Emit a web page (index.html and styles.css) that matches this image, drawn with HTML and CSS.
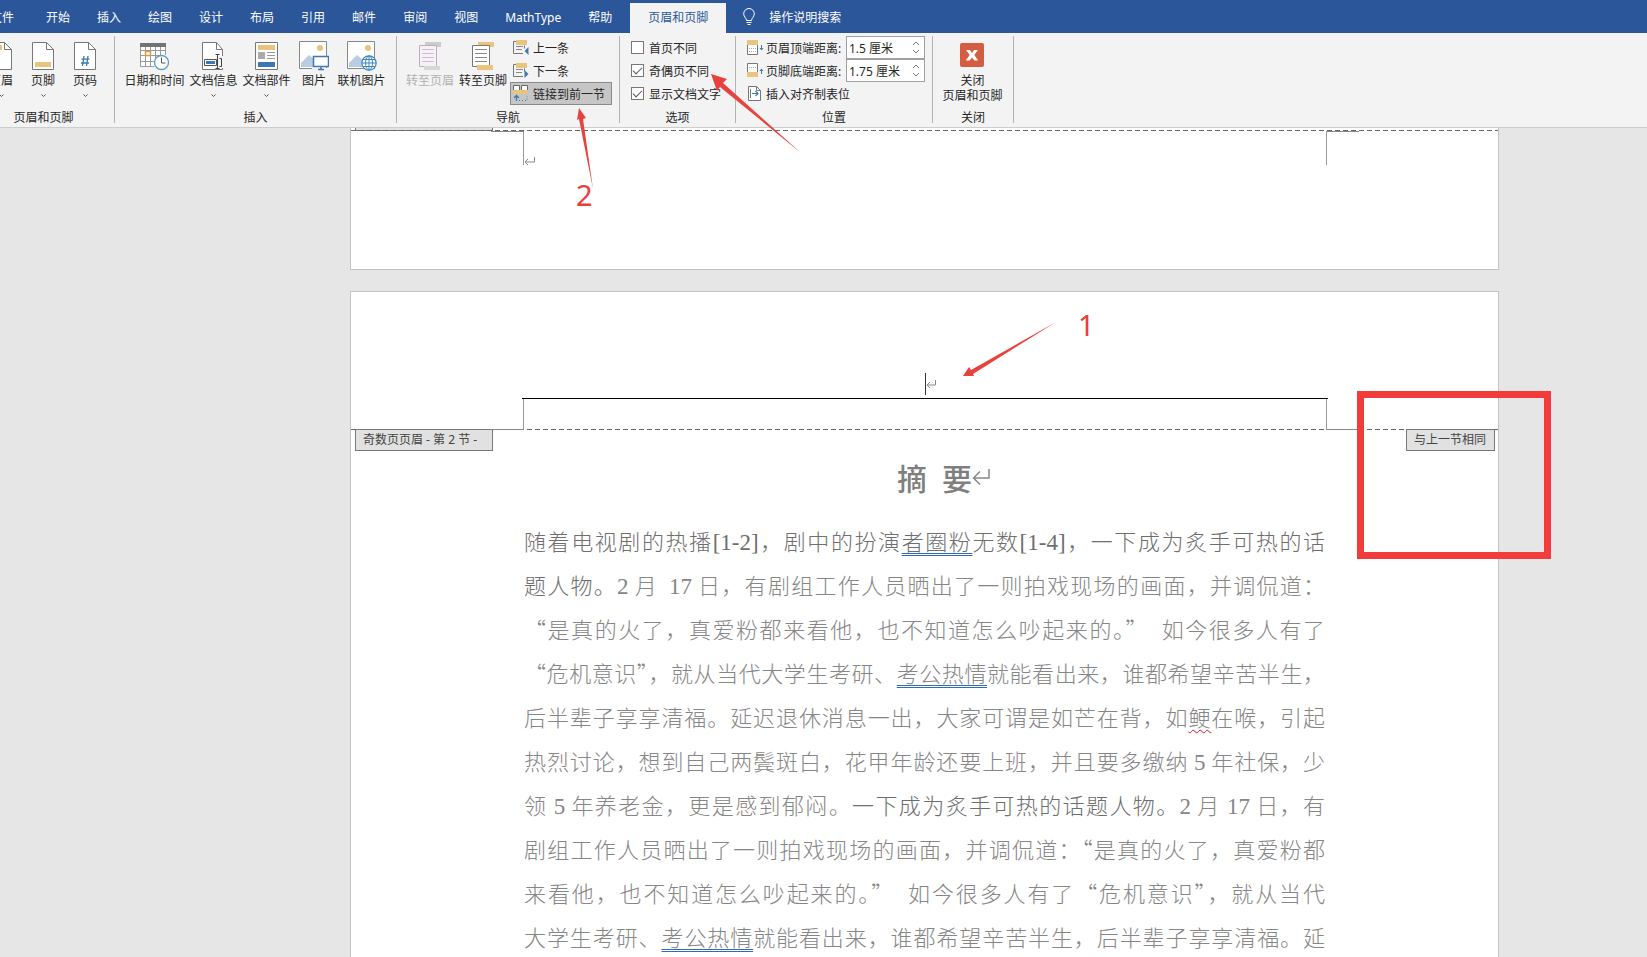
FILE: index.html
```html
<!DOCTYPE html>
<html lang="zh-CN">
<head>
    <meta charset="UTF-8">
    <meta name="viewport" content="width=device-width, initial-scale=1.0">
    <title>页眉和页脚</title>
    <link rel="stylesheet" href="styles.css">
</head>
<body>
    <!-- 选项卡 -->
    <nav class="tabs">
        <button class="tab tab-file">文件</button>
        <button class="tab">开始</button>
        <button class="tab">插入</button>
        <button class="tab">绘图</button>
        <button class="tab">设计</button>
        <button class="tab">布局</button>
        <button class="tab">引用</button>
        <button class="tab">邮件</button>
        <button class="tab">审阅</button>
        <button class="tab">视图</button>
        <button class="tab">MathType</button>
        <button class="tab">帮助</button>
        <button class="tab active">页眉和页脚</button>
        <button class="tab tell-me">
            <svg width="12" height="18" viewBox="0 0 12 18" fill="none" stroke="#fff"><path d="M3.5 12.5C3.5 10 .7 9 .7 5.8a5.3 5.3 0 0 1 10.6 0C11.300 9 8.500 10 8.500 12.500zM3.500 14.500h5M4.500 16.500h3"/></svg>
            操作说明搜索
        </button>
    </nav>

    <!-- 功能区 -->
    <div class="ribbon">
        <section class="group group-first">
            <div class="tools">
                <button class="big">
                    <svg width="22" height="28" viewBox="0 0 22 28"><path d="M.5.5h14l7 7v20H.5z" fill="#fff" stroke="#777"/><path d="M14.500.5v7h7" fill="none" stroke="#777"/><path d="M3 3h9v5H3z" fill="#e8c47c"/></svg>
                    <span>页眉</span>
                    <svg class="drop" width="5" height="4" viewBox="0 0 5 4"><path d="M.5.5l2 2 2-2" fill="none" stroke="#555"/></svg>
                </button>
                <button class="big">
                    <svg width="22" height="28" viewBox="0 0 22 28"><path d="M.5.5h14l7 7v20H.5z" fill="#fff" stroke="#777"/><path d="M14.500.5v7h7" fill="none" stroke="#777"/><path d="M3 20h16v5H3z" fill="#e8c47c"/></svg>
                    <span>页脚</span>
                    <svg class="drop" width="5" height="4" viewBox="0 0 5 4"><path d="M.5.5l2 2 2-2" fill="none" stroke="#555"/></svg>
                </button>
                <button class="big">
                    <svg width="22" height="28" viewBox="0 0 22 28"><path d="M.5.5h14l7 7v20H.5z" fill="#fff" stroke="#777"/><path d="M14.500.5v7h7" fill="none" stroke="#777"/><path d="M10 14L8.500 24M14 14l-1.500 10M7.500 17.200h8M7 21h8" fill="none" stroke="#3c78b4" stroke-width="1.300"/></svg>
                    <span>页码</span>
                    <svg class="drop" width="5" height="4" viewBox="0 0 5 4"><path d="M.5.5l2 2 2-2" fill="none" stroke="#555"/></svg>
                </button>
            </div>
            <h2>页眉和页脚</h2>
        </section>

        <section class="group group-insert">
            <div class="tools">
                <button class="big">
                    <svg width="30" height="28" viewBox="0 0 30 28"><path d="M1 1h26v24H1z" fill="#fff"/><path d="M1.500 4v20.500h14M6.500 4v20.500M11.500 4v20.500M16.500 4v12M21.500 4v9M26.500 4v9M1.500 8.500h25M1.500 13.500h20M1.500 19.500h14" fill="none" stroke="#999"/><path d="M1 1h26v4H1z" fill="#737373"/><path d="M6.500 9.500h5v4h-5z" fill="#fff" stroke="#dc9a50" stroke-width="1.500"/><circle cx="22.500" cy="20.500" r="7" fill="#fff" stroke="#5b9bc8" stroke-width="1.300"/><path d="M22.500 15.500v5.500h4" fill="none" stroke="#555"/></svg>
                    <span>日期和时间</span>
                </button>
                <button class="big">
                    <svg width="22" height="28" viewBox="0 0 22 28"><path d="M.5.5h14l6 7v20H.5z" fill="#fff" stroke="#777"/><path d="M14.500.5v7h6" fill="none" stroke="#777"/><path d="M14 14h7v12h-7z" fill="#f2f2f2"/><path d="M2.500 17.500h12v6h-12z" fill="#fff" stroke="#555"/><path d="M4 19h9v3H4z" fill="#3c78b4"/><path d="M13.500 12.500h4M15.500 12.500v14M13.500 26.500h4M17.500 16.500h2v8h-2" fill="none" stroke="#444"/></svg>
                    <span>文档信息</span>
                    <svg class="drop" width="5" height="4" viewBox="0 0 5 4"><path d="M.5.5l2 2 2-2" fill="none" stroke="#555"/></svg>
                </button>
                <button class="big">
                    <svg width="24" height="28" viewBox="0 0 24 28"><path d="M.5.5h22v27H.5z" fill="#fff" stroke="#777"/><path d="M3 3h17v5H3z" fill="#e8c47c"/><path d="M3 10h7v7H3z" fill="#aaa"/><path d="M12 10.500h8M12 13.500h8M12 16.500h8" stroke="#999"/><path d="M3 20h17v5H3z" fill="#3c78b4"/></svg>
                    <span>文档部件</span>
                    <svg class="drop" width="5" height="4" viewBox="0 0 5 4"><path d="M.5.5l2 2 2-2" fill="none" stroke="#555"/></svg>
                </button>
                <button class="big">
                    <svg width="30" height="30" viewBox="0 0 30 30"><path d="M.5.5h27v27H.5z" fill="#fff" stroke="#888"/><circle cx="21" cy="7" r="3" fill="#e8c47c"/><path d="M2 26v-4l8-8 5 4v8z" fill="#b8cde2"/><path d="M14.500 15.500h15v10h-15z" fill="#fff" stroke="#3c78b4" stroke-width="1.500"/><path d="M13 27h16v2H13z" fill="#f2f2f2"/><path d="M22 26v3M19 28.500h6" stroke="#3c78b4" stroke-width="1.500"/></svg>
                    <span>图片</span>
                </button>
                <button class="big">
                    <svg width="30" height="30" viewBox="0 0 30 30"><path d="M.5.5h27v27H.5z" fill="#fff" stroke="#888"/><circle cx="21" cy="7" r="3" fill="#e8c47c"/><path d="M2 26v-4l8-8 6 5v7z" fill="#b8cde2"/><circle cx="22" cy="22" r="7.200" fill="#fff" stroke="#3c86bd" stroke-width="1.200"/><path d="M22 15v14M15 22h14M16 18.500h12M16 25.500h12" stroke="#3c86bd"/><ellipse cx="22" cy="22" rx="3.500" ry="7" fill="none" stroke="#3c86bd"/></svg>
                    <span>联机图片</span>
                </button>
            </div>
            <h2>插入</h2>
        </section>

        <section class="group group-nav">
            <div class="tools">
                <button class="big" disabled>
                    <svg width="24" height="28" viewBox="0 0 24 28"><path d="M7 0h16v5H7z" fill="#ccc"/><path d="M1.500 3.500h17v21h-17z" fill="#f6f0f7" stroke="#b9b0bb"/><path d="M4 7.500h12M4 11.500h12M4 15.500h12M4 19.500h12" stroke="#cdbfd0"/><path d="M6 24h16v4H6z" fill="#d6d6d6"/></svg>
                    <span>转至页眉</span>
                </button>
                <button class="big">
                    <svg width="24" height="28" viewBox="0 0 24 28"><path d="M7 0h16v5H7z" fill="#e8c47c"/><path d="M1.500 3.500h17v21h-17z" fill="#fff" stroke="#777"/><path d="M4 7.500h12M4 11.500h12M4 15.500h12M4 19.500h12" stroke="#888"/><path d="M6 23h16v5H6z" fill="#e8c47c"/></svg>
                    <span>转至页脚</span>
                </button>
                <div class="rows">
                    <button class="small">
                        <svg width="16" height="16" viewBox="0 0 16 16"><path d="M3 0h11v5H3z" fill="#e8c47c"/><path d="M3 1.500H.5v12H10M11.500 5.500v3" fill="none" stroke="#777"/><path d="M3 6.500h7M3 9.500h6" stroke="#888"/><path d="M15.500 7v8l-4-4z" fill="#3c78b4"/></svg>
                        上一条
                    </button>
                    <button class="small">
                        <svg width="16" height="16" viewBox="0 0 16 16"><path d="M3 0h11v5H3z" fill="#e8c47c"/><path d="M3 1.500H.5v12H10M11.500 5.500v3" fill="none" stroke="#777"/><path d="M3 6.500h7M3 9.500h6" stroke="#888"/><path d="M11.500 7v8l4-4z" fill="#3c78b4"/></svg>
                        下一条
                    </button>
                    <button class="small pressed">
                        <svg width="16" height="17" viewBox="0 0 16 17"><path d="M.5 5V.5h6V5M8.500 5V.5h6V5" fill="#fff" stroke="#666"/><path d="M0 5h15v4H0z" fill="#e8c47c"/><path d="M3.500 16v-5M1 13l2.500-2.500L6 13" fill="none" stroke="#3c78b4" stroke-width="1.300"/><path d="M3 15.500h11V11" fill="none" stroke="#3c78b4" stroke-dasharray="1 2"/></svg>
                        链接到前一节
                    </button>
                </div>
            </div>
            <h2>导航</h2>
        </section>

        <section class="group group-options">
            <div class="rows">
                <label class="check"><input type="checkbox">首页不同</label>
                <label class="check"><input type="checkbox" checked>奇偶页不同</label>
                <label class="check"><input type="checkbox" checked>显示文档文字</label>
            </div>
            <h2>选项</h2>
        </section>

        <section class="group group-position">
            <div class="rows">
                <div class="measure">
                    <svg width="17" height="15" viewBox="0 0 17 15"><path d="M.5 5v9.500h10V5" fill="#fff" stroke="#777"/><path d="M0 0h11v5H0z" fill="#e8c47c"/><path d="M2 8.500h8M2 11.500h8" stroke="#aaa" stroke-dasharray="1 1"/><path d="M14.500 5v4" stroke="#3c78b4"/><path d="M12.500 8h4l-2 2.500z" fill="#3c78b4"/></svg>
                    <label for="header-top">页眉顶端距离:</label>
                    <div class="spin">
                        <input type="text" id="header-top" value="1.5 厘米">
                        <div class="arrows">
                            <button aria-label="增加"><svg width="8" height="5" viewBox="0 0 8 5"><path d="M1 4l3-3 3 3" fill="none" stroke="#777"/></svg></button>
                            <button aria-label="减少"><svg width="8" height="5" viewBox="0 0 8 5"><path d="M1 1l3 3 3-3" fill="none" stroke="#777"/></svg></button>
                        </div>
                    </div>
                </div>
                <div class="measure">
                    <svg width="17" height="15" viewBox="0 0 17 15"><path d="M.5 10V.5h10V10" fill="#fff" stroke="#777"/><path d="M0 9h11v5H0z" fill="#e8c47c"/><path d="M2 4.500h8" stroke="#aaa" stroke-dasharray="1 1"/><path d="M14.500 7v4" stroke="#3c78b4"/><path d="M12.500 8h4l-2-2.500z" fill="#3c78b4"/></svg>
                    <label for="footer-bottom">页脚底端距离:</label>
                    <div class="spin">
                        <input type="text" id="footer-bottom" value="1.75 厘米">
                        <div class="arrows">
                            <button aria-label="增加"><svg width="8" height="5" viewBox="0 0 8 5"><path d="M1 4l3-3 3 3" fill="none" stroke="#777"/></svg></button>
                            <button aria-label="减少"><svg width="8" height="5" viewBox="0 0 8 5"><path d="M1 1l3 3 3-3" fill="none" stroke="#777"/></svg></button>
                        </div>
                    </div>
                </div>
                <button class="measure">
                    <svg width="17" height="15" viewBox="0 0 17 15"><path d="M1.500.5h8l4 4v10h-12z" fill="#fff" stroke="#777"/><path d="M9.500.5v4h4M3.500 3v9" fill="none" stroke="#777"/><path d="M5 7.500h6M8.500 5l2.500 2.500L8.500 10" fill="none" stroke="#3c78b4" stroke-width="1.200"/></svg>
                    插入对齐制表位
                </button>
            </div>
            <h2>位置</h2>
        </section>

        <section class="group group-close">
            <div class="tools">
                <button class="big">
                    <svg width="24" height="28" viewBox="0 0 24 28"><rect y="1" width="24" height="24" rx="2" fill="#d45c40"/><path d="M6 8h4l2 3 2-3h4l-3.700 5 4 5.500h-4L12 15.500 9.700 18.500H5.700l4-5.500z" fill="#fff"/></svg>
                    <span>关闭<br>页眉和页脚</span>
                </button>
            </div>
            <h2>关闭</h2>
        </section>
    </div>

    <!-- 文档区 -->
    <main class="workspace">
        <article class="page page-prev">
            <div class="mark-edge"></div>
            <div class="dashes"></div>
            <div class="corners"><svg width="11" height="9" viewBox="0 0 11 9"><path d="M10.500 0v5H1M4 2L1 5l3 3" fill="none" stroke="#888"/></svg></div>
        </article>

        <article class="page page-current">
            <header class="header-text"><i class="caret"></i><svg width="10" height="9" viewBox="0 0 10 9"><path d="M9.500 0v5H1M4 2L1 5l3 3" fill="none" stroke="#888"/></svg></header>
            <div class="corners"></div>
            <div class="dashes"></div>
            <div class="marks">
                <span class="mark mark-section">奇数页页眉 - 第 2 节 -</span>
                <span class="mark">与上一节相同</span>
            </div>
            <h1>摘&ensp;要<svg width="18" height="17" viewBox="0 0 18 17"><path d="M17 0v9H1.500M8 2.500L1.500 9 8 15.500" fill="none" stroke="#888" stroke-width="1.500"/></svg></h1>
            <div class="text">
                <p><b>随着电视剧的热播<span class="num">[1-2]</span>，剧中的扮演<u>者圈粉</u>无数<span class="num">[1-4]</span>，一下成为炙手可热的话</b></p>
                <p><b>题人物。</b><span class="num">2</span> 月&ensp;<span class="num">17</span> 日，有剧组工作人员晒出了一则拍戏现场的画面，并调侃道：</p>
                <p>“是真的火了，真爱粉都来看他，也不知道怎么吵起来的。”　如今很多人有了</p>
                <p>“危机意识”，就从当代大学生考研、<u>考公热情</u>就能看出来，谁都希望辛苦半生，</p>
                <p>后半辈子享享清福。延迟退休消息一出，大家可谓是如芒在背，如<u class="typo">鲠</u>在喉，引起</p>
                <p>热烈讨论，想到自己两鬓斑白，花甲年龄还要上班，并且要多缴纳 <span class="num">5</span> 年社保，少</p>
                <p>领 <span class="num">5</span> 年养老金，更是感到郁闷。<b>一下成为炙手可热的话题人物。</b><span class="num">2</span> 月 <span class="num">17</span> 日，有</p>
                <p>剧组工作人员晒出了一则拍戏现场的画面，并调侃道：“是真的火了，真爱粉都</p>
                <p>来看他，也不知道怎么吵起来的。”　如今很多人有了“危机意识”，就从当代</p>
                <p>大学生考研、<u>考公热情</u>就能看出来，谁都希望辛苦半生，后半辈子享享清福。延</p>
            </div>
        </article>
    </main>

    <!-- 标注 -->
    <svg class="arrow arrow-odd" width="91" height="80" viewBox="0 0 91 80"><path d="M0 0l16 5-4 4 78 70L9 13l-3 4z" fill="#e8413e"/></svg>
    <svg class="arrow arrow-link" width="20" height="82" viewBox="0 0 20 82"><path d="M2 0l7 10-3 1 10 70L2 11l-2 1z" fill="#e8413e"/></svg>
    <svg class="arrow arrow-header" width="94" height="55" viewBox="0 0 94 55"><path d="M0 54l6-9 2 3L93 0 10 52l1 2z" fill="#e8413e"/></svg>
    <span class="step step-one">1</span>
    <span class="step step-two">2</span>
    <div class="red-box"></div>
</body>
</html>
```

FILE: styles.css
```css
* {
    box-sizing: border-box;
}

body {
    margin: 0;
    height: 100vh;
    display: flex;
    flex-direction: column;
    position: relative;
    overflow: hidden;
    background: #e6e6e6;
    color: #262626;
    font-family: "Noto Sans", "Noto Sans CJK SC", sans-serif;
    font-size: 12px;
}

button {
    margin: 0;
    padding: 0;
    border: 0;
    background: none;
    color: inherit;
    font: inherit;
    white-space: nowrap;
}

svg {
    display: block;
    flex: none;
}

/* 选项卡 */
.tabs {
    display: flex;
    align-items: stretch;
    gap: 27px;
    height: 33px;
    padding-top: 3px;
    background: #2b579a;
    color: #fff;
    flex: none;
}

.tab {
    padding-bottom: 2px;
    flex: none;
}

.tab-file {
    margin-left: -10px;
    margin-right: 5px;
}

.tab.active {
    margin-left: -9px;
    padding: 0 18px 2px;
    background: #f3f3f3;
    color: #2b579a;
}

.tell-me {
    display: flex;
    align-items: center;
    gap: 14px;
    margin-left: -10px;
}

/* 功能区 */
.ribbon {
    display: flex;
    height: 95px;
    padding: 3px 0 4px;
    background: #f3f3f3;
    border-bottom: 1px solid #cdcdcd;
    flex: none;
}

.group {
    display: flex;
    flex-direction: column;
    border-right: 1px solid #b4b4b4;
    flex: none;
}

.group h2 {
    margin: 0;
    padding-top: 5px;
    font-size: 12px;
    font-weight: 400;
    line-height: 16px;
    text-align: center;
}

.group-first {
    width: 142px;
    margin-left: -27px;
}

.group-insert {
    width: 282px;
}

.group-nav {
    width: 223px;
}

.group-options {
    width: 116px;
}

.group-position {
    width: 197px;
}

.group-close {
    width: 81px;
}

.tools {
    display: flex;
    justify-content: center;
    height: 69px;
}

.big {
    display: flex;
    flex-direction: column;
    align-items: center;
    min-width: 42px;
    height: 69px;
    padding: 5px 3px 0 2px;
    line-height: 15px;
}

.big > svg:first-child {
    height: 30px;
    margin-bottom: 2px;
}

.big:disabled {
    color: #b1b1b1;
}

.big .drop {
    margin-top: 6px;
}

.rows {
    display: grid;
    grid-auto-rows: 23px;
    height: 69px;
}

.small {
    display: flex;
    align-items: center;
    gap: 4px;
    padding: 0 6px 0 2px;
    border: 1px solid transparent;
}

.small.pressed {
    background: #c6c6c6;
    border-color: #8a8a8a;
}

.check {
    display: flex;
    align-items: center;
    gap: 5px;
    padding-left: 11px;
}

.check input {
    appearance: none;
    width: 13px;
    height: 13px;
    margin: 0;
    border: 1px solid #777;
    background: #fff;
    display: grid;
    place-items: center;
}

.check input:checked::before {
    content: "";
    width: 8px;
    height: 4px;
    margin-bottom: 2px;
    border-left: 1px solid #555;
    border-bottom: 1px solid #555;
    transform: rotate(-45deg);
}

.measure {
    display: flex;
    align-items: center;
    gap: 2px;
    padding-left: 11px;
}

.measure label {
    flex: 1;
    white-space: nowrap;
}

.spin {
    display: flex;
    width: 79px;
    height: 23px;
    margin-right: 7px;
    border: 1px solid #a0a0a0;
    background: #fff;
}

.spin input {
    width: 100%;
    min-width: 0;
    padding: 0 0 0 2px;
    border: 0;
    background: none;
    color: inherit;
    font: inherit;
}

.arrows {
    display: flex;
    flex-direction: column;
    justify-content: space-evenly;
    padding: 0 4px;
}

/* 文档区 */
.workspace {
    flex: 1;
    min-height: 0;
    overflow: hidden;
    padding: 0 148px 0 350px;
    display: flex;
    flex-direction: column;
    gap: 21px;
}

.page {
    background: #fff;
    border: 1px solid #c3c3c3;
    flex: none;
}

.page-prev {
    height: 142px;
    border-top: 0;
}

/* 上一页页眉标签的下沿 */
.mark-edge {
    width: 138px;
    height: 3px;
    margin: 0 0 -1px 4px;
    border: 1px solid #777;
    border-top: 0;
    background: #e1e1e1;
}

.dashes {
    height: 1px;
    background: repeating-linear-gradient(90deg, #666 0 5px, transparent 5px 8px);
}

.corners {
    position: relative;
    height: 30px;
    margin: 0 171px 0 172px;
    border: 1px solid #999;
    border-width: 0 1px;
}

.page-prev .corners {
    height: 34px;
    padding-top: 26px;
}

/* 页边角线 */
.corners::before,
.corners::after {
    content: "";
    position: absolute;
    bottom: -1px;
    width: 33px;
    height: 1px;
    background: #888;
}

.corners::before {
    right: 100%;
}

.corners::after {
    left: 100%;
}

.page-prev .corners::before,
.page-prev .corners::after {
    top: 0;
}

.header-text {
    display: flex;
    align-items: center;
    justify-content: center;
    height: 107px;
    margin: 0 170px 0 171px;
    padding: 81px 0 3px 10px;
    border-bottom: 1px solid #000;
}

.caret {
    width: 1px;
    height: 22px;
    background: #333;
}

.marks {
    display: flex;
    justify-content: space-between;
    margin-top: -1px;
    padding: 0 3px 0 4px;
}

.mark {
    padding: 0 8px 0 7px;
    border: 1px solid #777;
    background: #e1e1e1;
    color: #444;
    line-height: 20px;
}

.mark-section {
    min-width: 138px;
}

h1 {
    display: flex;
    align-items: center;
    justify-content: center;
    margin: 0;
    padding-left: 38px;
    color: #7f7f7f;
    font-family: "Noto Sans CJK SC", sans-serif;
    font-size: 30px;
    font-weight: 500;
    line-height: 52px;
}

.text {
    margin: 15px 173px 0;
    color: #868686;
    font-family: "Noto Sans CJK SC", sans-serif;
    font-size: 22px;
    font-weight: 300;
    line-height: 44px;
}

.text p {
    height: 44px;
    margin: 0;
    text-align: justify;
    text-align-last: justify;
    white-space: nowrap;
}

.text b {
    color: #6e6e6e;
    font-weight: 300;
}

.num {
    font-family: "Liberation Serif", serif;
    font-size: 23px;
    line-height: 1;
}

.text u {
    text-decoration: underline double #2e6db4 1px;
    text-underline-offset: 3px;
}

.text .typo {
    text-decoration: underline wavy #c8191e 1px;
}

/* 标注 */
.arrow,
.step,
.red-box {
    position: absolute;
    pointer-events: none;
}

.arrow-odd {
    left: 711px;
    top: 74px;
}

.arrow-link {
    left: 577px;
    top: 108px;
}

.arrow-header {
    left: 963px;
    top: 322px;
}

.step {
    color: #ee3b3b;
    font-family: "Noto Sans", sans-serif;
    font-size: 29px;
    font-weight: 400;
    line-height: 30px;
}

.step-one {
    left: 1078px;
    top: 310px;
}

.step-two {
    left: 576px;
    top: 180px;
}

.red-box {
    left: 1357px;
    top: 391px;
    width: 194px;
    height: 168px;
    border: 7px solid #f43b3b;
}
```
